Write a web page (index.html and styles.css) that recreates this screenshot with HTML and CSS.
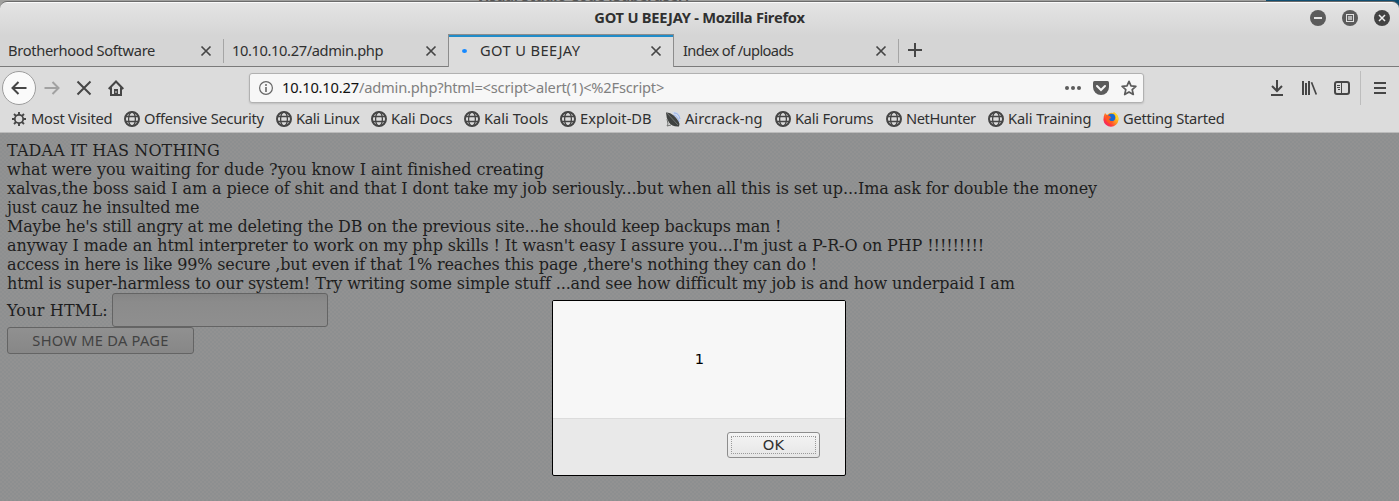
FILE: index.html
```html
<!DOCTYPE html>
<html lang="en">
<head>
<meta charset="utf-8">
<title>GOT U BEEJAY</title>
<link rel="stylesheet" href="styles.css">
</head>
<body>
<svg width="0" height="0" class="defs">
  <symbol id="globe" viewBox="0 0 16 16"><g fill="none" stroke="#464646"><circle cx="8" cy="8" r="7" stroke-width="2"/><ellipse cx="8" cy="8" rx="3.4" ry="7" stroke-width="1.3"/><path d="M1.5 5.5h13M1.5 10.5h13" stroke-width="1.3"/></g></symbol>
  <symbol id="close" viewBox="0 0 12 12"><path d="M1.5 1.5l9 9M10.5 1.5l-9 9" fill="none" stroke="#464646" stroke-width="1.7"/></symbol>
</svg>
<div class="desktop"><span class="behind">Visual Studio Code (Superuser)</span></div>
<div class="window">
  <header class="titlebar">
    <h1 class="title">GOT U BEEJAY - Mozilla Firefox</h1>
    <div class="controls">
      <svg width="16" height="16" viewBox="0 0 16 16"><circle cx="8" cy="8" r="8" fill="#5b5b5b"/><path d="M4 8h8" stroke="#e4e4e4" stroke-width="2"/></svg>
      <svg width="16" height="16" viewBox="0 0 16 16"><circle cx="8" cy="8" r="8" fill="#5b5b5b"/><rect x="4.5" y="4.5" width="7" height="7" fill="none" stroke="#e0e0e0"/><rect x="6" y="6" width="4" height="4" fill="#b5b5b5"/></svg>
      <svg width="16" height="16" viewBox="0 0 16 16"><circle cx="8" cy="8" r="8" fill="#434343"/><path d="M5 5l6 6M11 5l-6 6" stroke="#eee" stroke-width="1.5"/></svg>
    </div>
  </header>
  <nav class="tabs">
    <div class="tab"><span class="t1">Brotherhood Software</span><svg width="12" height="12"><use href="#close"/></svg></div>
    <div class="tab"><span class="t2">10.10.10.27/admin.php</span><svg width="12" height="12"><use href="#close"/></svg></div>
    <div class="tab active"><i class="dot"></i><span class="t3">GOT U BEEJAY</span><svg width="12" height="12"><use href="#close"/></svg></div>
    <div class="tab"><span class="t4">Index of /uploads</span><svg width="12" height="12"><use href="#close"/></svg></div>
    <div class="newtab"><svg width="14" height="14" viewBox="0 0 14 14"><path d="M7 0v14M0 7h14" stroke="#464646" stroke-width="2"/></svg></div>
  </nav>
  <div class="toolbar">
    <div class="navbuttons">
      <span class="back"><svg width="16" height="16" viewBox="0 0 16 16"><path d="M15.5 8H1.5M7.5 2L1.5 8l6 6" fill="none" stroke="#464646" stroke-width="2"/></svg></span>
      <svg width="16" height="16" viewBox="0 0 16 16"><path d="M.5 8h14M8.5 2l6 6-6 6" fill="none" stroke="#a1a1a1" stroke-width="2"/></svg>
      <svg width="16" height="16" viewBox="0 0 16 16"><path d="M1.5 1.5l13 13M14.5 1.5l-13 13" fill="none" stroke="#464646" stroke-width="2"/></svg>
      <svg width="16" height="16" viewBox="0 0 16 16"><path d="M.7 9L8 1.5 15.3 9M3 7.5V15h10V7.500" fill="none" stroke="#464646" stroke-width="2"/><path d="M6 14.5V9h4v5.500z" fill="#464646"/><path d="M8 11v2" stroke="#ddd"/></svg>
    </div>
    <div class="urlbar">
      <svg width="14" height="14" viewBox="0 0 14 14"><circle cx="7" cy="7" r="6.4" fill="none" stroke="#666" stroke-width="1.2"/><path d="M7 6v5" stroke="#666" stroke-width="1.6"/><circle cx="7" cy="4" r="1" fill="#666"/></svg>
      <span class="url"><b class="host">10.10.10.27</b>/admin.php?html=&lt;script&gt;alert(1)&lt;%2Fscript&gt;</span>
      <svg class="dots" width="16" height="16" viewBox="0 0 16 16" fill="#5c5c5c"><circle cx="2" cy="8" r="2"/><circle cx="8" cy="8" r="2"/><circle cx="14" cy="8" r="2"/></svg>
      <svg width="16" height="16" viewBox="0 0 16 16"><path d="M1.5 1h13Q16 1 16 2.5V7A8 8 0 0 1 0 7V2.5Q0 1 1.5 1z" fill="#5c5c5c"/><path d="M4 6l4 4 4-4" fill="none" stroke="#f6f6f6" stroke-width="2" stroke-linecap="round"/></svg>
      <svg width="16" height="16" viewBox="0 0 16 16"><path d="M8 1.3l2 4.6 4.9.4-3.700 3.300 1.100 4.900L8 11.900l-4.300 2.600 1.100-4.900L1.100 6.300 6 5.900z" fill="none" stroke="#5c5c5c" stroke-width="1.7" stroke-linejoin="round"/></svg>
    </div>
    <div class="tools">
      <svg width="16" height="16" viewBox="0 0 16 16"><path d="M7 0v11M2 6l5 5 5-5M1 15h12" fill="none" stroke="#464646" stroke-width="2"/></svg>
      <svg width="16" height="16" viewBox="0 0 16 16"><path d="M1 1v14M4 3v12M7 1v14" fill="none" stroke="#464646" stroke-width="2"/><path d="M9.500 2.300L14.300 14.500" stroke="#464646" stroke-width="1.700"/></svg>
      <svg width="16" height="16" viewBox="0 0 16 16"><rect x="1" y="2" width="14" height="12" rx="2" fill="none" stroke="#464646" stroke-width="2"/><path d="M7.500 2v12M3 5.500h3M3 7.500h3M4 9.500h2" stroke="#464646"/></svg>
    </div>
    <div class="menu"><svg width="12" height="12" viewBox="0 0 12 12"><path d="M0 1h12M0 6h12M0 11h12" stroke="#464646" stroke-width="2"/></svg></div>
  </div>
  <div class="bookmarks">
    <a class="snug"><svg width="16" height="16" viewBox="0 0 16 16"><circle cx="8" cy="8" r="4.2" fill="none" stroke="#464646" stroke-width="1.8"/><path d="M8 1v3M8 12v3M1 8h3M12 8h3M3 3l2.200 2.200M10.800 10.800L13 13M13 3l-2.200 2.200M5.200 10.800L3 13" stroke="#464646" stroke-width="1.900"/></svg><span>Most Visited</span></a>
    <a class="snug"><svg width="16" height="16"><use href="#globe"/></svg><span>Offensive Security</span></a>
    <a class="snug"><svg width="16" height="16"><use href="#globe"/></svg><span>Kali Linux</span></a>
    <a class="near"><svg width="16" height="16"><use href="#globe"/></svg><span>Kali Docs</span></a>
    <a><svg width="16" height="16"><use href="#globe"/></svg><span>Kali Tools</span></a>
    <a><svg width="16" height="16"><use href="#globe"/></svg><span>Exploit-DB</span></a>
    <a><svg width="16" height="16" viewBox="0 0 16 16"><path d="M7 1q6-1 8 4v7z" fill="#cbd8ef"/><path d="M9 2q5 0 6 6M8 4q5 1 6 7" fill="none" stroke="#9db4e6"/><path d="M1 1.500q4-.5 7 2.500 5 4 6.500 9l-.5 2.500q-7 .5-10-4Q1 7 1 1.500z" fill="#3f4241"/><path d="M2 2l11 12M2 8l1 5-1 2 4-1" fill="none" stroke="#707371"/></svg><span>Aircrack-ng</span></a>
    <a class="snug"><svg width="16" height="16"><use href="#globe"/></svg><span>Kali Forums</span></a>
    <a class="tight"><svg width="16" height="16"><use href="#globe"/></svg><span>NetHunter</span></a>
    <a class="near"><svg width="16" height="16"><use href="#globe"/></svg><span>Kali Training</span></a>
    <a class="snug"><svg width="16" height="16" viewBox="0 0 16 16"><defs><linearGradient id="fox" x1="1" y1="0" x2="0" y2="1"><stop offset="0" stop-color="#ffe52e"/><stop offset=".4" stop-color="#ffa21c"/><stop offset=".7" stop-color="#ff3b3b"/><stop offset="1" stop-color="#e8178a"/></linearGradient></defs><path d="M2 2l2 2q3-3 6-2l1-1q5 3 4.500 8A7.600 7.600 0 0 1 .4 9Q.3 5 2 2z" fill="url(#fox)"/><circle cx="8.500" cy="6.500" r="3.800" fill="#1769d2"/><path d="M3 4l4 1 1 2-2 1q1 3 5 2-2 3-5 2-4-2-3-8z" fill="#ff5a20"/><path d="M10 1q4 3 3 7l2 1q1-5-5-8z" fill="#ffd52a"/></svg><span>Getting Started</span></a>
  </div>
  <main class="page">
    <div class="copy">
      <p class="l1">TADAA IT HAS NOTHING</p>
      <p class="l2">what were you waiting for dude ?you know I aint finished creating</p>
      <p class="l3">xalvas,the boss said I am a piece of shit and that I dont take my job seriously...but when all this is set up...Ima ask for double the money</p>
      <p class="l4">just cauz he insulted me</p>
      <p class="l5">Maybe he's still angry at me deleting the DB on the previous site...he should keep backups man !</p>
      <p class="l6">anyway I made an html interpreter to work on my php skills ! It wasn't easy I assure you...I'm just a P-R-O on PHP !!!!!!!!!</p>
      <p class="l7">access in here is like 99% secure ,but even if that 1% reaches this page ,there's nothing they can do !</p>
      <p class="l8">html is super-harmless to our system! Try writing some simple stuff ...and see how difficult my job is and how underpaid I am</p>
    </div>
    <div class="field"><label for="html">Your HTML:</label><input id="html" type="text"></div>
    <button class="show">SHOW ME DA PAGE</button>
    <div class="dialog">
      <div class="message">1</div>
      <div class="actions"><button class="ok"><span>OK</span></button></div>
    </div>
  </main>
</div>
</body>
</html>
```
FILE: styles.css
```css
* { box-sizing: border-box; }
body { margin: 0; width: 1399px; height: 501px; overflow: hidden; background: linear-gradient(90deg, #a0a09e 1266px, #0f4d70 1266px); font: 14.67px/20px "Noto Sans", sans-serif; color: #303030; display: flex; flex-direction: column; }
svg { display: block; flex: none; }
.defs { position: absolute; }
.desktop { height: 1px; overflow: hidden; padding-left: 476px; }
.behind { display: block; margin-top: -13px; font-weight: 700; font-size: 14px; line-height: 18px; color: #555; white-space: nowrap; }
.window { height: 500px; display: flex; flex-direction: column; border-top: 1px solid #6b6b6b; border-radius: 7px 7px 0 0; overflow: hidden; background: linear-gradient(#fafafa 0, #fafafa 1px, #e4e4e4 1px, #d5d5d5 34px, #d5d5d5 65px, #dcdcdc 65px); }
.titlebar { height: 32px; display: grid; grid-template-columns: 1fr auto; align-items: center; padding-right: 9px; }
.title { margin: 0; grid-area: 1 / 1 / 2 / 3; text-align: center; padding: 0 0 2px 9px; font-size: 14.67px; line-height: 20px; font-weight: 700; letter-spacing: -.25px; }
.controls { grid-area: 1 / 2; display: flex; gap: 16px; }
.tabs { height: 33px; display: flex; box-shadow: inset 0 -1px #7b7b7b; }
.tab { width: 225px; height: 33px; padding: 0 12px 0 9px; display: flex; align-items: center; justify-content: space-between; white-space: nowrap; }
.tab span { padding-bottom: 2px; }
.tab:first-child { width: 224px; padding-left: 8px; }
.tab:not(.active) { background: linear-gradient(#a5a5a5, #a5a5a5) 100% 5px / 1px 24px no-repeat; }
.tab:nth-child(2) { background: none; padding-left: 8px; }
.t1 { letter-spacing: -.32px; }
.t2 { letter-spacing: -.38px; }
.t3 { letter-spacing: .4px; }
.t4 { letter-spacing: -.62px; }
.tab.active { width: 226px; margin-left: -1px; padding: 0 11px 0 13px; background: #dcdcdc; border: 1px solid #8c8c8c; border-bottom: 0; box-shadow: inset 0 2px #208cc9; justify-content: flex-start; }
.active svg { margin-left: auto; }
.active .dot { width: 5px; height: 4px; border-radius: 50%; background: #1689ff; margin-right: 13px; }
.newtab { padding: 9px 0 0 9px; }
.toolbar { height: 41px; display: flex; align-items: center; }
.navbuttons { width: 249px; padding-left: 2px; display: flex; align-items: center; gap: 16px; }
.back { width: 34px; height: 34px; margin-right: -8px; border: 1px solid #9c9c9c; border-radius: 50%; background: #fafafa; display: grid; place-items: center; }
.urlbar { width: 895px; height: 30px; border: 1px solid #b1b1b1; border-radius: 3px; background: #f7f7f7; box-shadow: 0 1px 2px #0002; display: flex; align-items: center; padding: 0 6px 0 9px; gap: 12px; color: #808080; }
.url { margin-left: -3px; padding-bottom: 2px; letter-spacing: -.2px; }
.host { color: #111; font-weight: 400; letter-spacing: -.17px; }
.dots { margin-left: auto; }
.tools { margin-left: 126px; display: flex; gap: 16px; }
.menu { margin-left: 10px; height: 34px; padding-left: 13px; border-left: 1px solid #bdbdbd; display: flex; align-items: center; }
.bookmarks { height: 25px; padding-left: 11px; display: grid; grid-template-columns: 113px 152px 95px 93px 96px 105px 110px 111px 102px 115px 140px; border-bottom: 1px solid #bbb; }
.bookmarks a { display: flex; gap: 4px; height: 22px; align-items: center; white-space: nowrap; }
.bookmarks span { padding-bottom: 2px; }
.snug { letter-spacing: -.25px; }
.near { letter-spacing: -.1px; }
.tight { letter-spacing: -.4px; }
.page { flex: 1; padding: 8px 7px; position: relative; color: #1e1e1e; background: repeating-conic-gradient(#8d8f90 0 25%, #929292 0 50%) 0 0 / 4px 4px; font: 16px/19px "DejaVu Serif", serif; }
.copy { white-space: nowrap; }
.copy p { margin: 0; }
.l1 { letter-spacing: .1px; }
.l2 { letter-spacing: -.05px; }
.l3 { letter-spacing: -.1px; }
.l4 { letter-spacing: -.2px; }
.l5 { letter-spacing: -.157px; }
.l6 { letter-spacing: -.106px; }
.l7 { letter-spacing: -.155px; }
.l8 { letter-spacing: -.113px; }
.field { height: 34px; display: flex; align-items: center; gap: 4px; letter-spacing: .2px; }
.field input { width: 216px; height: 34px; border: 1px solid #646464; border-radius: 3px; background: linear-gradient(#858585, #8b8b8b 8px, #8f8f8f); }
.show { display: block; width: 187px; height: 27px; padding: 0 0 2px; border: 1px solid #646464; border-radius: 3px; background: linear-gradient(#909090, #878787); color: #424242; font: 14.67px/20px "Noto Sans", sans-serif; letter-spacing: .25px; }
.dialog { position: absolute; left: 552px; top: 167px; width: 294px; height: 176px; border: 1px solid #000; border-radius: 2px; background: #e9e9e9; font: 14.67px/18px "DejaVu Sans", sans-serif; color: #000; overflow: hidden; }
.message { height: 118px; padding: 0 0 2px 1px; background: #f7f7f7; border-bottom: 1px solid #dcdcdc; display: grid; place-items: center; }
.actions { display: flex; justify-content: flex-end; padding: 13px 25px; }
.ok { width: 93px; height: 26px; padding: 3px; border: 1px solid #8d8d8d; border-radius: 3px; background: linear-gradient(#f4f4f4, #e6e6e6); font: inherit; line-height: 16px; letter-spacing: .3px; color: #303030; }
.ok span { display: block; border: 1px dotted #999; height: 18px; }
```
